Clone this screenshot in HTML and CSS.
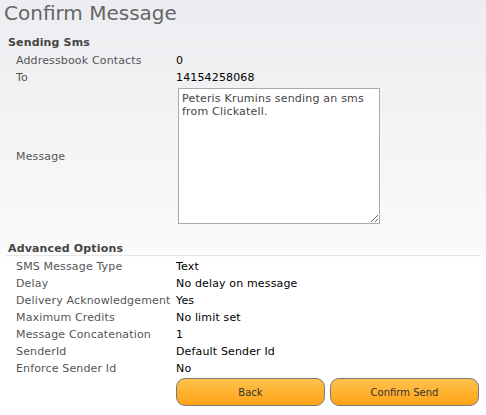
FILE: index.html
```html
<!DOCTYPE html>
<html lang="en">
<head>
<meta charset="UTF-8" />
<title>Confirm Message</title>
<link rel="stylesheet" href="styles.css">
</head>
<body>

<h1 class="page-title">Confirm Message</h1>

<div class="section-head">Sending Sms</div>
<div class="field-grid">
  <div class="field-label">Addressbook Contacts</div>
  <div class="field-value">0</div>

  <div class="field-label">To</div>
  <div class="field-value">14154258068</div>

  <div class="field-label message-label">Message</div>
  <div class="field-value">
    <textarea class="message-box">Peteris Krumins sending an sms from Clickatell.</textarea>
  </div>
</div>

<div class="section-head advanced">Advanced Options</div>
<div class="field-grid">
  <div class="field-label">SMS Message Type</div>
  <div class="field-value">Text</div>

  <div class="field-label">Delay</div>
  <div class="field-value">No delay on message</div>

  <div class="field-label">Delivery Acknowledgement</div>
  <div class="field-value">Yes</div>

  <div class="field-label">Maximum Credits</div>
  <div class="field-value">No limit set</div>

  <div class="field-label">Message Concatenation</div>
  <div class="field-value">1</div>

  <div class="field-label">SenderId</div>
  <div class="field-value">Default Sender Id</div>

  <div class="field-label">Enforce Sender Id</div>
  <div class="field-value">No</div>
</div>

<div class="button-row">
  <button type="button" class="orange-btn">Back</button>
  <button type="button" class="orange-btn">Confirm Send</button>
</div>

</body>
</html>
```

FILE: styles.css
```css
* {
  box-sizing: border-box;
}

body {
  margin: 0;
  padding: 0 5px 0 0;
  font-family: "DejaVu Sans", Verdana, sans-serif;
  font-size: 11px;
  letter-spacing: 0.15px;
  color: #000;
  background: linear-gradient(to bottom, #ecedf0 0, #fafafa 250px, #fff 260px);
  min-height: 415px;
}

.page-title {
  margin: 0;
  padding-left: 4px;
  font-family: "DejaVu Sans", Tahoma, sans-serif;
  font-size: 20px;
  font-weight: normal;
  letter-spacing: 0;
  line-height: 26px;
  color: #666;
}

/* section titles */
.section-head {
  margin: 9px 0 0 8px;
  font-weight: bold;
  line-height: 16px;
  color: #444;
}

.section-head + .field-grid {
  margin-top: 1px;
}

.section-head.advanced {
  margin: 15px 0 0 6px;
  padding-left: 2px;
  line-height: 13px;
  border-bottom: 1px solid #e6e6e8;
}

.field-grid {
  display: grid;
  grid-template-columns: 160px 1fr;
  padding-left: 16px;
  line-height: 17px;
}

.section-head.advanced + .field-grid {
  margin-top: 2px;
}

.field-label {
  color: #555;
  white-space: nowrap;
}

.message-label {
  align-self: center;
}

.message-box {
  display: block;
  width: 202px;
  height: 136px;
  margin: 2px 0 3px 2px;
  padding: 3px 3px;
  border: 1px solid #aaa;
  background: #fff;
  font-family: "DejaVu Sans", Verdana, sans-serif;
  font-size: 11px;
  letter-spacing: 0.2px;
  line-height: 13px;
  color: #444;
  resize: both;
}

.button-row {
  display: flex;
  gap: 5px;
  margin: 1px 0 0 176px;
}

.orange-btn {
  width: 149px;
  height: 28px;
  border: 1px solid #7a7a7a;
  border-radius: 9px;
  background: linear-gradient(to bottom, #ffc24e, #ffa316);
  font-family: "DejaVu Sans", Verdana, sans-serif;
  font-size: 10px;
  color: #333;
  cursor: pointer;
}
```
